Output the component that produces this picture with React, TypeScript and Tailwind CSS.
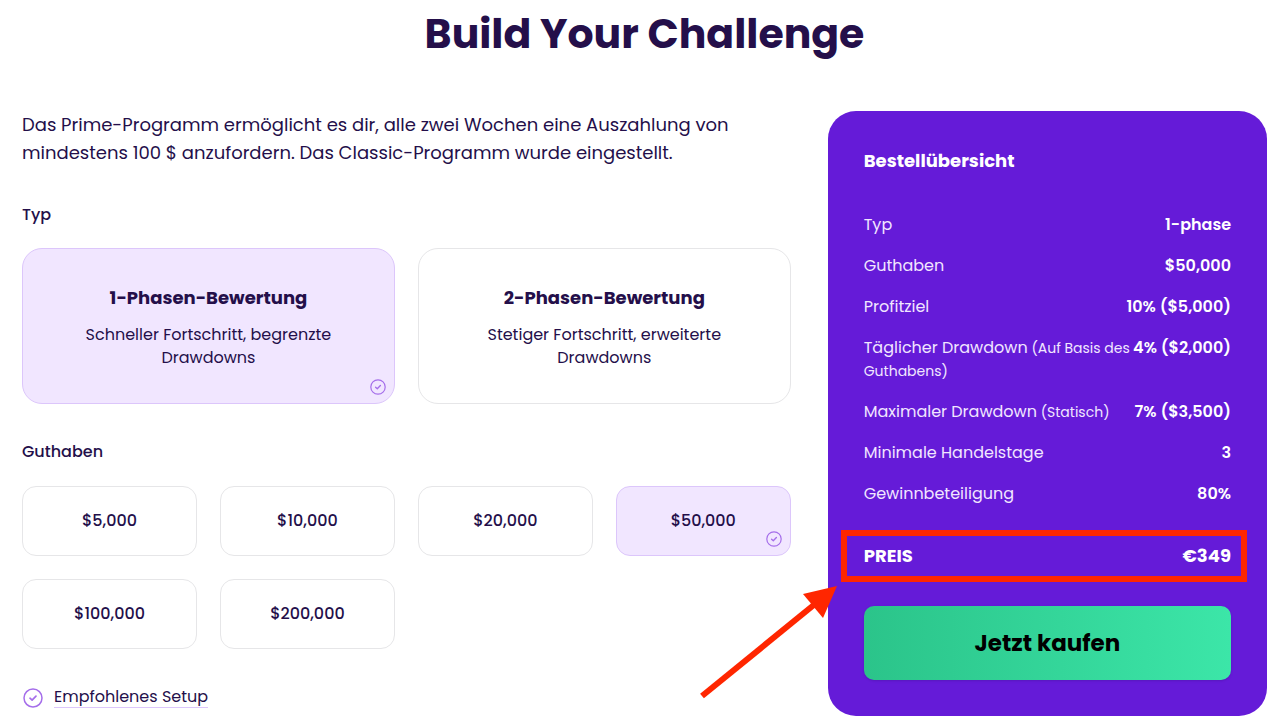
import React, { useState } from 'react';

// --- Static data ---
const challengeTypes = [
  { id: '1-phase', title: '1-Phasen-Bewertung', description: 'Schneller Fortschritt, begrenzte Drawdowns' },
  { id: '2-phase', title: '2-Phasen-Bewertung', description: 'Stetiger Fortschritt, erweiterte Drawdowns' },
];

const balances = ['$5,000', '$10,000', '$20,000', '$50,000', '$100,000', '$200,000'];

interface SummaryRow {
  label: string;
  note?: string;
  value: string;
}

// --- Circle with a small check mark ---
const CheckCircle: React.FC<{ className: string }> = ({ className }) => (
  <svg viewBox="0 0 20 20" fill="none" stroke="currentColor" strokeLinecap="round" strokeLinejoin="round" className={className} aria-hidden="true">
    <circle cx="10" cy="10" r="9" strokeWidth="1.5" />
    <path d="M7 10.2 9.1 12.1 13 8.1" strokeWidth="1.7" />
  </svg>
);

// --- Selectable card, backed by a radio input ---
interface OptionCardProps {
  name: string;
  value: string;
  checked: boolean;
  onSelect: (value: string) => void;
  className: string;
  children: React.ReactNode;
}

const OptionCard: React.FC<OptionCardProps> = ({ name, value, checked, onSelect, className, children }) => (
  <label
    className={`relative flex cursor-pointer flex-col items-center justify-center border text-center ${className} ${
      checked ? 'border-[#dcc6fb] bg-[#f1e6ff]' : 'border-[#e6e6e8] bg-white'
    }`}
  >
    <input type="radio" name={name} value={value} checked={checked} onChange={() => onSelect(value)} className="sr-only" />
    {children}
    {checked && <CheckCircle className="absolute right-2 bottom-2 size-4 text-[#a56eea]" />}
  </label>
);

const App: React.FC = () => {
  const [type, setType] = useState('1-phase');
  const [balance, setBalance] = useState('$50,000');

  const summary: SummaryRow[] = [
    { label: 'Typ', value: type },
    { label: 'Guthaben', value: balance },
    { label: 'Profitziel', value: '10% ($5,000)' },
    { label: 'Täglicher Drawdown', note: '(Auf Basis des Guthabens)', value: '4% ($2,000)' },
    { label: 'Maximaler Drawdown', note: '(Statisch)', value: '7% ($3,500)' },
    { label: 'Minimale Handelstage', value: '3' },
    { label: 'Gewinnbeteiligung', value: '80%' },
  ];

  return (
    <main className="bg-white pt-1 pr-[13px] pb-2 pl-[22px] font-[Poppins,Inter,sans-serif] text-[#240f4a]">
      <h1 className="mb-[47px] text-center text-[41px] leading-[60px] font-bold">Build Your Challenge</h1>

      <div className="grid grid-cols-[7fr_4fr] items-start gap-[37px]">
        {/* --- Configuration --- */}
        <div>
          <p className="mb-9 text-lg leading-7">
            Das Prime-Programm ermöglicht es dir, alle zwei Wochen eine Auszahlung von mindestens 100 $ anzufordern. Das
            Classic-Programm wurde eingestellt.
          </p>

          <h2 id="type-label" className="mb-[21px] text-base leading-6 font-medium">Typ</h2>
          <div role="radiogroup" aria-labelledby="type-label" className="mb-9 grid grid-cols-2 gap-[23px]">
            {challengeTypes.map((item) => (
              <OptionCard key={item.id} name="type" value={item.id} checked={type === item.id} onSelect={setType} className="rounded-[20px] px-12 pt-[35px] pb-[34px]">
                <span className="mb-[11px] text-lg leading-7 font-bold">{item.title}</span>
                <span className="text-base leading-[23px]">{item.description}</span>
              </OptionCard>
            ))}
          </div>

          <h2 id="balance-label" className="mb-[22px] text-base leading-6 font-medium">Guthaben</h2>
          <div role="radiogroup" aria-labelledby="balance-label" className="mb-[38px] grid grid-cols-4 gap-[23px]">
            {balances.map((item) => (
              <OptionCard key={item} name="balance" value={item} checked={balance === item} onSelect={setBalance} className="h-[70px] rounded-[14px]">
                <span className="text-base leading-6 font-medium">{item}</span>
              </OptionCard>
            ))}
          </div>

          <div className="flex items-center gap-[11px]">
            <CheckCircle className="ml-px size-5 text-[#a56eea]" />
            <a href="#setup" className="border-b border-[#dcc6fb] text-base leading-5">Empfohlenes Setup</a>
          </div>
        </div>

        {/* --- Order summary --- */}
        <aside className="rounded-[28px] bg-[#651bd8] p-9 text-white">
          <h2 className="mb-[38px] text-lg leading-7 font-bold">Bestellübersicht</h2>

          <dl className="mb-[37px] flex flex-col gap-[18px] text-base leading-[23px]">
            {summary.map((row) => (
              <div key={row.label} className="flex justify-between">
                <dt className="text-[#f1e6ff]">
                  {row.label}
                  {row.note && <span className="text-sm leading-none"> {row.note}</span>}
                </dt>
                <dd className="font-semibold whitespace-nowrap">{row.value}</dd>
              </div>
            ))}
          </dl>

          <div className="relative mb-9 flex justify-between text-lg leading-7 font-bold">
            <span>PREIS</span>
            <span>€349</span>
            {/* Highlight frame and pointer around the price */}
            <div className="pointer-events-none absolute -inset-y-3 -right-4 -left-[23px] border-[6px] border-[#ff2600]" />
            <svg viewBox="0 0 140 114" fill="#ff2600" className="pointer-events-none absolute top-[43px] -left-[164px] h-[114px] w-[140px]" aria-hidden="true">
              <path d="M2 111 115 19" fill="none" stroke="#ff2600" strokeWidth="6" />
              <path d="M137 1 103 9 123 33Z" />
            </svg>
          </div>

          <button type="button" className="h-[74px] w-full rounded-[10px] bg-linear-to-r from-[#2bc48a] to-[#3ce6a8] text-[23px] font-bold text-black shadow-sm">
            Jetzt kaufen
          </button>
        </aside>
      </div>
    </main>
  );
};

export default App;
